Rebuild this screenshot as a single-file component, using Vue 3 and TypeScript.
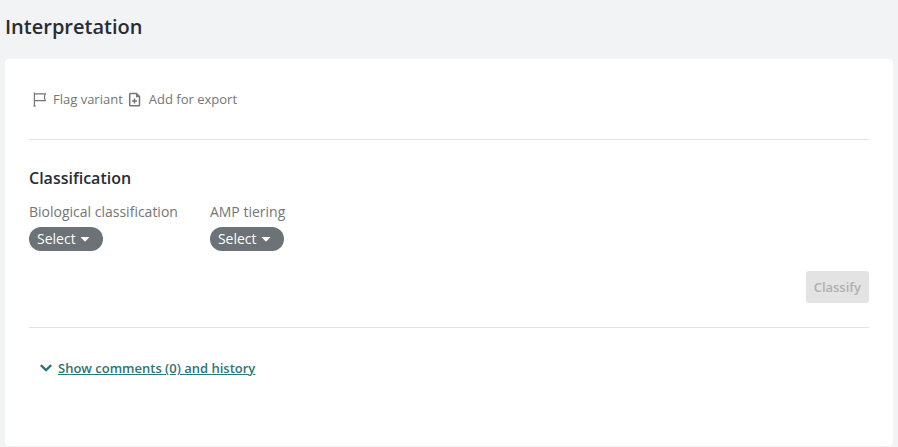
<script setup lang="ts">
import { ref } from 'vue'

interface Field {
  id: string
  label: string
}

const fields: Field[] = [
  { id: 'biological', label: 'Biological classification' },
  { id: 'amp', label: 'AMP tiering' },
]
const selected = ref<Record<string, string>>({ biological: '', amp: '' })
const commentCount = ref(0)
</script>

<template>
  <main class="page">
    <h1 class="title">Interpretation</h1>
    <section class="card">
      <div class="actions">
        <button type="button" class="action">
          <svg width="16" height="16" viewBox="0 0 16 16" fill="none" stroke="currentColor" stroke-width="1.2">
            <path d="M3.4.6v14M2.6 14.1h2M3.4 1.8h10.9l-1 3.4 1 3.4H3.4" />
          </svg>
          Flag variant
        </button>
        <button type="button" class="action">
          <svg width="16" height="16" viewBox="0 0 16 16" fill="none" stroke="currentColor" stroke-width="1.5">
            <path d="M9.4 1.5H3.5a.8.8 0 0 0-.8.8v10.6a.8.8 0 0 0 .8.8h8.2a.8.8 0 0 0 .8-.8V4.6z" />
            <path d="M7.5 6.5v5M5 9h5" />
            <path d="M9 1.4l3.7 3.8H9z" fill="currentColor" stroke="none" />
          </svg>
          Add for export
        </button>
      </div>
      <div class="classification">
        <h2 class="subtitle">Classification</h2>
        <div class="fields">
          <div v-for="field in fields" :key="field.id" class="field">
            <label :for="field.id">{{ field.label }}</label>
            <div class="pill">
              <select :id="field.id" v-model="selected[field.id]">
                <option value="">Select</option>
              </select>
              <svg class="caret" width="10" height="5" viewBox="0 0 10 5" fill="currentColor"><path d="M.5 0h9L5 4.8z" /></svg>
            </div>
          </div>
        </div>
        <button type="button" class="classify" disabled>Classify</button>
      </div>
      <div class="history">
        <svg width="12" height="8" viewBox="0 0 12 8" fill="none" stroke="currentColor" stroke-width="2.3">
          <path d="M.8 1.200L6 6.200l5.200-5" />
        </svg>
        <a href="#history">Show comments ({{ commentCount }}) and history</a>
      </div>
    </section>
  </main>
</template>

<style>
body {
  background: #f1f3f4;
}
</style>

<style scoped>
.page {
  box-sizing: border-box;
  display: flex;
  flex-direction: column;
  min-height: 100vh;
  padding: 12px 5px 1px;
  font-family: "Open Sans", sans-serif;
  font-size: 14px;
  color: #757575;
}
.title {
  margin: 0 0 17px;
  font-size: 20px;
  line-height: 30px;
  font-weight: 600;
  color: #272d32;
}
.card {
  flex: 1;
  padding: 24px;
  background: #fff;
  border-radius: 4px;
}
.actions {
  display: flex;
  gap: 4px;
  padding: 4px 2px 27px;
}
.action {
  display: flex;
  align-items: center;
  gap: 6px;
  padding: 0;
  border: 0;
  background: none;
  color: inherit;
  font: 13px/25px "Open Sans", sans-serif;
}
.classification {
  display: flex;
  flex-direction: column;
  padding: 23px 0 24px;
  border-top: 1px solid #e3e3e3;
  border-bottom: 1px solid #e3e3e3;
}
.subtitle {
  margin: 0 0 8px;
  font-size: 16px;
  line-height: 30px;
  font-weight: 600;
  color: #272d32;
}
.fields {
  display: flex;
  gap: 32px;
}
.field {
  display: flex;
  flex-direction: column;
  align-items: flex-start;
  gap: 4px;
  line-height: 22px;
}
.pill {
  display: flex;
  align-items: center;
  position: relative;
  color: #fff;
}
.pill select {
  appearance: none;
  height: 24px;
  padding: 0 27px 0 8px;
  border: 0;
  border-radius: 12px;
  background: #6c7275;
  color: inherit;
  font: 14px/24px "Open Sans", sans-serif;
}
.caret {
  position: absolute;
  right: 13px;
  pointer-events: none;
}
.classify {
  align-self: flex-end;
  height: 32px;
  margin-top: 20px;
  padding: 0 8px;
  border: 0;
  border-radius: 3px;
  background: #e3e3e3;
  color: #b0b0b0;
  font: 600 13px/32px "Open Sans", sans-serif;
}
.history {
  display: flex;
  align-items: center;
  gap: 6px;
  padding: 28px 11px;
  color: #2b7676;
  font-size: 13px;
  line-height: 24px;
}
.history a {
  color: inherit;
  font-weight: 600;
}
</style>
